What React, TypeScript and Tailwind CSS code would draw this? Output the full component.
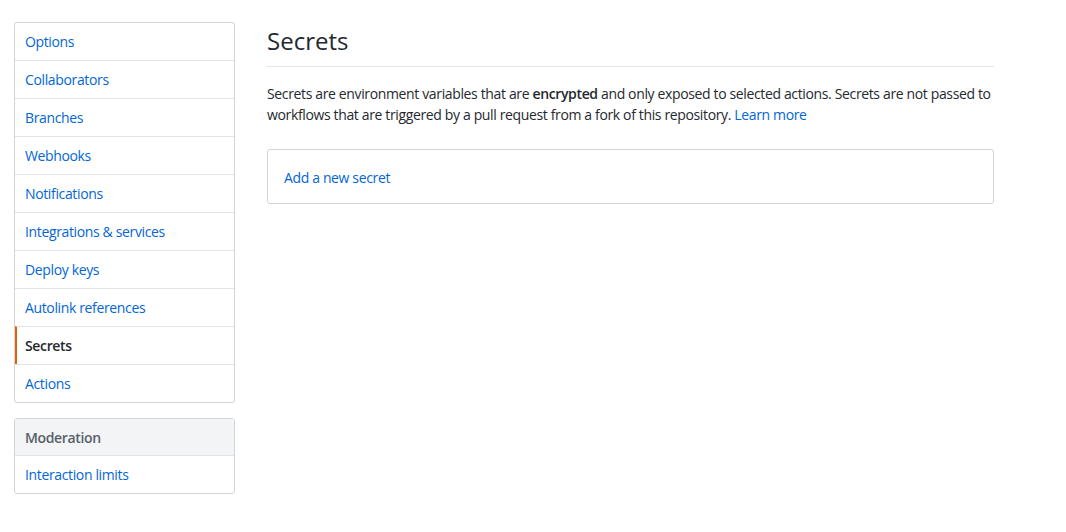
import React from "react";

const items = [
  "Options",
  "Collaborators",
  "Branches",
  "Webhooks",
  "Notifications",
  "Integrations & services",
  "Deploy keys",
  "Autolink references",
  "Secrets",
  "Actions",
];

export default function App() {
  return (
    <div
      className="min-h-[532px] bg-white text-[#24292e] tracking-[-0.36px]"
      style={{ fontFamily: '"Open Sans", "Noto Sans", sans-serif' }}
    >
      <div className="flex pl-[14px] pt-[22px]">
        <div className="w-[221px] shrink-0">
          <div className="rounded-[3px] border border-[#d1d5da]">
            {items.map((it, i) => {
              const sel = it === "Secrets";
              return (
                <div
                  key={it}
                  className={`flex items-center text-[14px] ${
                    i > 0 ? "h-[38px] border-t border-[#e1e4e8]" : "h-[37px]"
                  } ${
                    sel
                      ? "border-l-2 border-l-[#e36209] pl-[8px] font-semibold text-[#24292e]"
                      : "pl-[10px] text-[#0366d6]"
                  }`}
                >
                  {it}
                </div>
              );
            })}
          </div>
          <div className="mt-[15px] rounded-[3px] border border-[#d1d5da]">
            <div className="flex h-[36px] items-center bg-[#f3f4f6] pl-[10px] text-[14px] font-semibold text-[#586069]">
              Moderation
            </div>
            <div className="flex h-[38px] items-center border-t border-[#e1e4e8] pl-[10px] text-[14px] text-[#0366d6]">
              Interaction limits
            </div>
          </div>
        </div>
        <div className="ml-[32px] w-[727px]">
          <div className="flex h-[45px] items-center border-b border-[#e1e4e8] pb-[7px] text-[24px] font-normal leading-none tracking-normal">
            Secrets
          </div>
          <p className="mt-[16px] text-[14px] leading-[21px]">
            Secrets are environment variables that are{" "}
            <strong className="font-semibold">encrypted</strong> and only exposed to selected actions. Secrets are not
            passed to workflows that are triggered by a pull request from a fork of this repository.{" "}
            <span className="text-[#0366d6]">Learn more</span>
          </p>
          <div className="mt-[24px] flex h-[55px] items-center rounded-[3px] border border-[#d1d5da] pl-[16px] pt-[1px] text-[14px] text-[#0366d6]">
            Add a new secret
          </div>
        </div>
      </div>
    </div>
  );
}
